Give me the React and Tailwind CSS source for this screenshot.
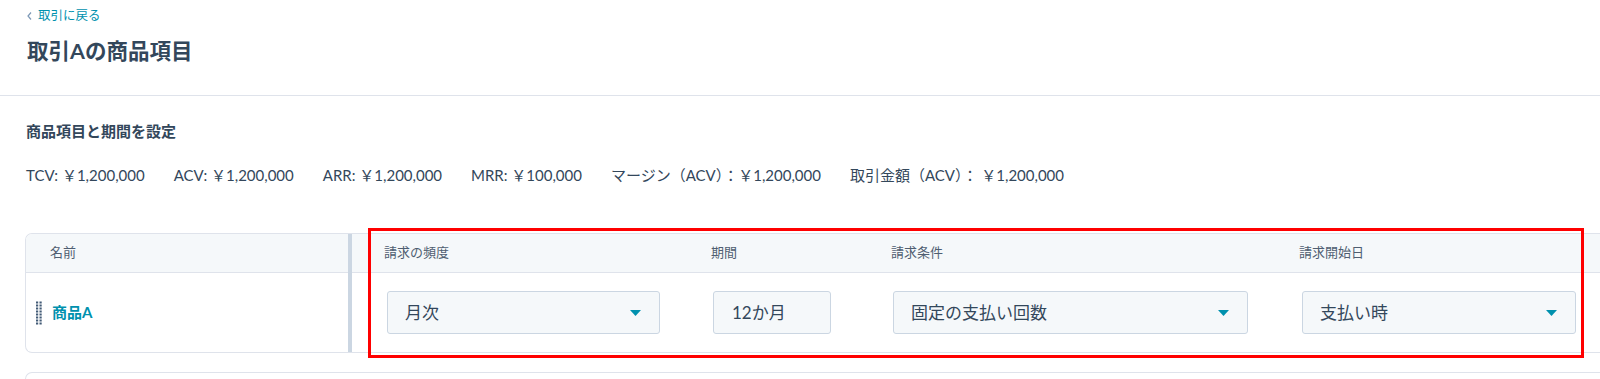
import React from "react";

const font = { fontFamily: 'Lato, "Noto Sans CJK JP", "Noto Sans", sans-serif' };

function Caret() {
  return (
    <svg width="11" height="6" viewBox="0 0 11 6" className="shrink-0">
      <path d="M0 0 L11 0 L5.5 6 Z" fill="#0091ae" />
    </svg>
  );
}

function DragHandle() {
  const dots = [];
  for (let r = 0; r < 8; r++) {
    for (let c = 0; c < 2; c++) {
      dots.push(<rect key={`${r}-${c}`} x={c * 3.5} y={r * 3 + 0.5} width="2.2" height="2" fill="#425b76" />);
    }
  }
  return (
    <svg width="6" height="24" viewBox="0 0 6 24" className="shrink-0">
      {dots}
    </svg>
  );
}

function SelectBox({ label, width }) {
  return (
    <div
      className="h-[43px] rounded-[3px] border border-[#cbd6e2] bg-[#f5f8fa] flex items-center justify-between pl-[17px] pr-[18px] text-[17px] text-[#33475b]"
      style={{ width }}
    >
      <span>{label}</span>
      <Caret />
    </div>
  );
}

export default function App() {
  return (
    <div className="w-[1600px] h-[379px] overflow-hidden bg-white text-[#33475b]" style={font}>
      {/* top header */}
      <div className="border-b border-[#dfe3eb] h-[96px] pl-[27px] pt-[8px]">
        <div className="flex items-center gap-[6px] h-[16px] text-[12.5px] leading-[16px] text-[#0091ae]">
          <svg width="5" height="8" viewBox="0 0 5 8" className="shrink-0">
            <path d="M4 0.5 L1 4 L4 7.5" fill="none" stroke="#7c98b6" strokeWidth="1.2" />
          </svg>
          <span>取引に戻る</span>
        </div>
        <h1 className="mt-[12px] text-[21.5px] leading-[30px] font-bold text-[#33475b]">取引Aの商品項目</h1>
      </div>

      {/* section */}
      <div className="pl-[26px]">
        <h2 className="mt-[25px] text-[15px] leading-[20px] font-bold text-[#33475b]">商品項目と期間を設定</h2>
        <div className="mt-[24px] flex items-center gap-[29px] text-[15px] leading-[20px] text-[#33475b]">
          <span>TCV: ￥1,200,000</span>
          <span>ACV: ￥1,200,000</span>
          <span>ARR: ￥1,200,000</span>
          <span>MRR: ￥100,000</span>
          <span>マージン（ACV）：￥1,200,000</span>
          <span>取引金額（ACV）： ￥1,200,000</span>
        </div>
      </div>

      {/* table */}
      <div className="relative ml-[25px] mt-[48px] w-[1700px]">
        <div className="flex border border-r-0 border-[#dfe3eb] rounded-l-[7px] overflow-hidden">
          {/* name column */}
          <div className="w-[322px] flex flex-col">
            <div className="h-[39px] bg-[#f5f8fa] border-b border-[#dfe3eb] flex items-center pl-[24px] text-[13px] text-[#4f5e71]">
              名前
            </div>
            <div className="h-[79px] flex items-center pl-[10px] gap-[10px]">
              <DragHandle />
              <span className="text-[15px] font-bold text-[#0091ae]">商品A</span>
            </div>
          </div>
          {/* divider */}
          <div className="w-[4px] bg-[#cbd6e2]" />
          {/* other columns */}
          <div className="flex-1 flex flex-col">
            <div className="h-[39px] bg-[#f5f8fa] border-b border-[#dfe3eb] flex items-center text-[13px] text-[#4f5e71]">
              <div className="w-[343px] pl-[32px]">請求の頻度</div>
              <div className="w-[180px] pl-[16px]">期間</div>
              <div className="w-[408px] pl-[16px]">請求条件</div>
              <div className="w-[300px] pl-[16px]">請求開始日</div>
            </div>
            <div className="h-[79px] flex items-center">
              <div className="w-[343px] pl-[35px]">
                <SelectBox label="月次" width={273} />
              </div>
              <div className="w-[180px] pl-[18px]">
                <div className="w-[118px] h-[43px] rounded-[3px] border border-[#cbd6e2] bg-[#f5f8fa] flex items-center pl-[18px] text-[17px] text-[#33475b]">
                  12か月
                </div>
              </div>
              <div className="w-[408px] pl-[18px]">
                <SelectBox label="固定の支払い回数" width={355} />
              </div>
              <div className="w-[300px] pl-[19px]">
                <SelectBox label="支払い時" width={274} />
              </div>
            </div>
          </div>
        </div>

        {/* annotation */}
        <div className="absolute left-[343px] top-[-5px] w-[1216px] h-[130px] border-[3px] border-[#ff0000] pointer-events-none" />

        {/* next card */}
        <div className="mt-[19px] h-[40px] border border-r-0 border-[#dfe3eb] rounded-tl-[7px]" />
      </div>
    </div>
  );
}
